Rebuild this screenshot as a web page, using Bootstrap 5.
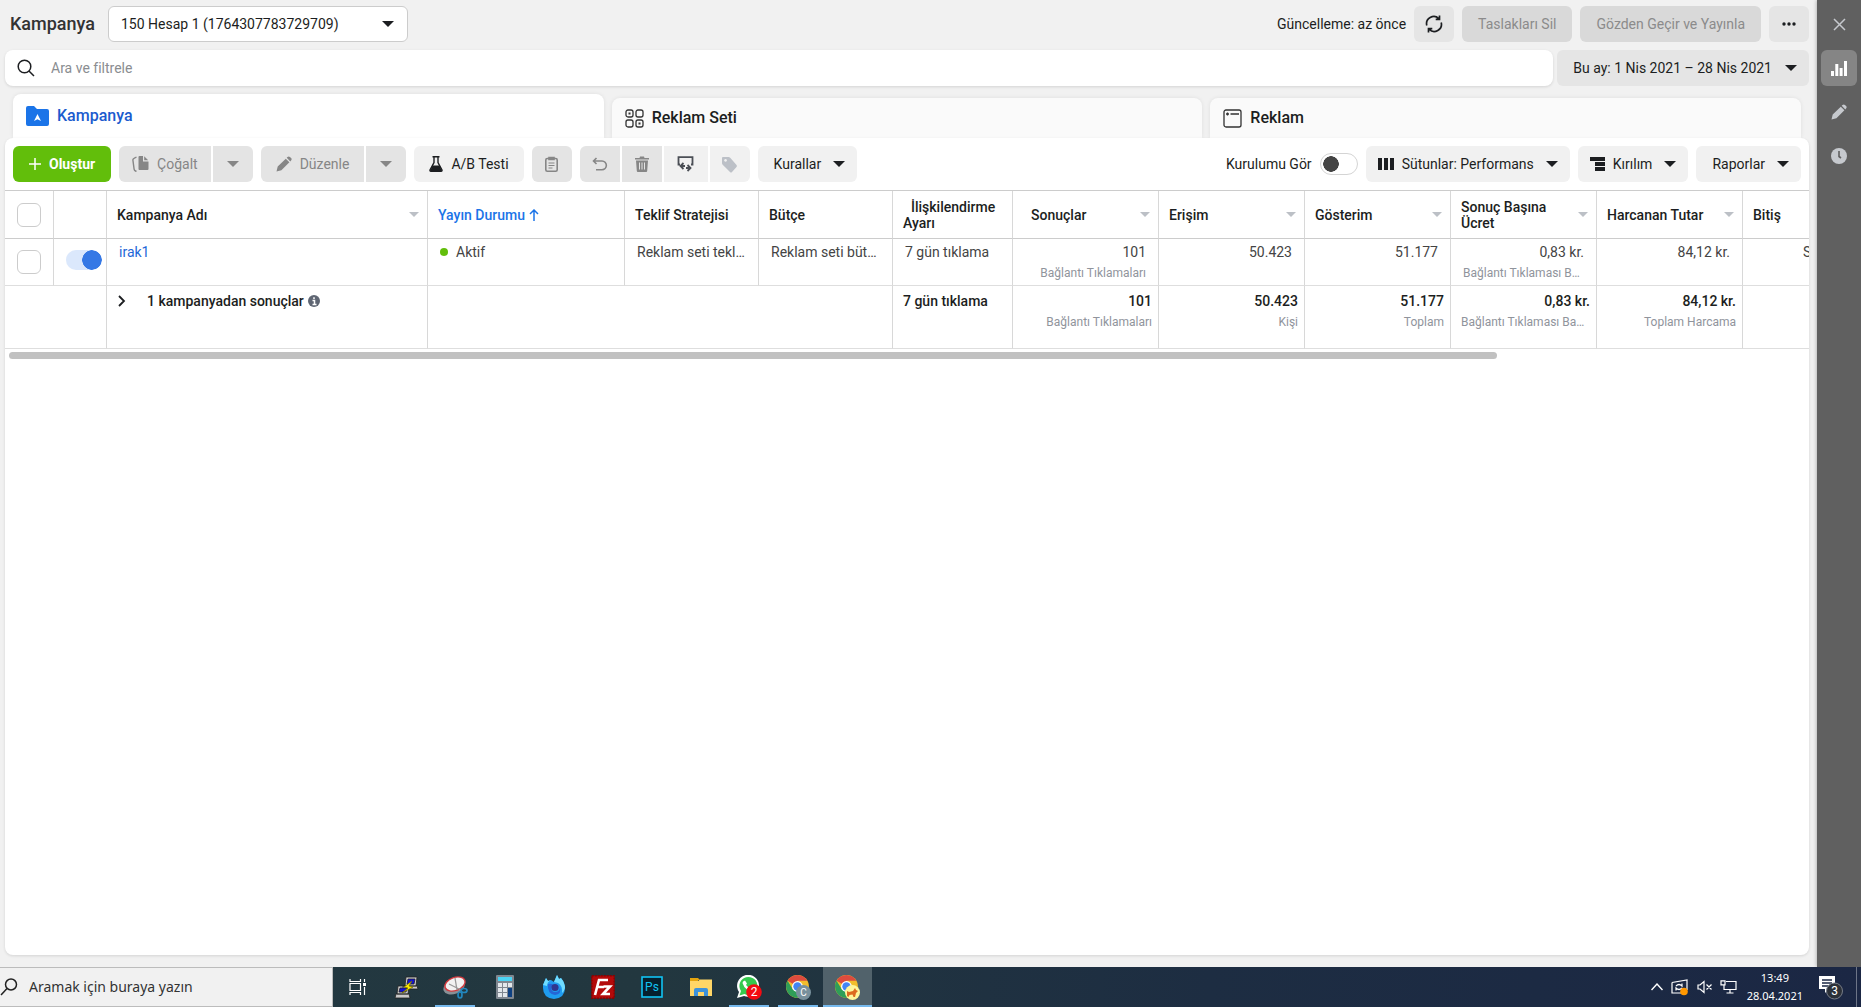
<!DOCTYPE html>
<html lang="tr">
<head>
<meta charset="utf-8">
<meta name="viewport" content="width=device-width, initial-scale=1">
<title>Kampanya</title>
<link href="https://cdn.jsdelivr.net/npm/bootstrap@5.3.0/dist/css/bootstrap.min.css" rel="stylesheet">
<style>
body{font-family:Roboto,"Liberation Sans",sans-serif;font-size:14px;line-height:20px;color:#1c1e21;background:#f1f1f1;height:100vh;overflow:hidden}
.btn{--bs-btn-font-size:14px;--bs-btn-line-height:20px;--bs-btn-border-width:0;--bs-btn-border-radius:6px;--bs-btn-padding-y:0;--bs-btn-padding-x:0;--bs-btn-disabled-opacity:1;height:36px;display:flex;align-items:center;justify-content:center;white-space:nowrap;color:#1c1e21}
svg{display:block;flex:none}
.work-area{min-height:0}
.main-pane{min-width:0;margin-left:5px;padding-right:8px}
.top-bar{height:50px;padding:6px 0 8px}
.heading-text{font-size:18px;font-weight:500;line-height:24px;color:#333;margin:0 5px}
.account-select{width:300px;border:1px solid #ccc;background-color:#fff;padding:0 13px 0 12px}
.caret{width:0;height:0;border:6px solid transparent;border-top-color:currentColor;border-bottom:0;flex:none}
.caret-sm{border-width:5px;border-bottom:0;color:#bcc0c6}
.gray-btn,.gray-btn:disabled{background:#e5e5e5}
.drafts-btn,.drafts-btn:disabled{background:#d9d9d9;color:#8b8b8b}
.off-btn,.off-btn:disabled{background:#e4e4e4;color:#868686}
.soft-btn{background:#f1f1f1}
.sq-btn{width:40px}
.tool-btn{padding:0 15px}
.copy-btn{padding:0 13px}
.date-btn{padding:0 12px 0 16px;gap:13px}
.find-box{height:36px;border-radius:8px;box-shadow:0 1px 3px rgba(0,0,0,.12)}
.find-box input{font-size:14px;outline:0}
.find-box input::placeholder{color:#8a8d91;opacity:1}
.tabs-row{height:52px;padding:0 8px}
.tab-item{height:40px;flex:1 1 0;border-radius:8px 8px 0 0;background:#fafafa;color:#1c1e21;font-size:16px;font-weight:500;text-decoration:none;padding-left:13px;box-shadow:0 0 4px rgba(0,0,0,.08)}
.tab-item.current{height:44px;background:#fff;color:#1b5bce}
.sheet{background:#fff;border-radius:8px;box-shadow:0 1px 3px rgba(0,0,0,.12);margin-bottom:12px;position:relative}
.create-btn,.create-btn:hover{background:#62be0b;color:#fff;font-weight:700}
.btn-pair{gap:2px}
.side-rail{width:44px;padding-top:6px;background:#606060;color:#c6c9ce;box-shadow:0 0 4px rgba(0,0,0,.35)}
.side-rail .btn{width:36px;color:#c6c9ce}
.side-rail .btn.current{background:#858585;color:#fff}
.grid-wrap{border-top:1px solid #ccc;overflow:hidden}
.grid-table{table-layout:fixed;width:2173px;border-collapse:separate;border-spacing:0}
.grid-table th,.grid-table td{border-right:1px solid #d8d8d8;border-bottom:1px solid #dedede;vertical-align:top}
.grid-table th{height:48px;vertical-align:middle;font-weight:500;line-height:16px;border-bottom-color:#ccc;padding:0 8px 0 10px}
.grid-table tbody td{height:47px;padding:3px 12px 0;color:#444}
.grid-table tfoot td{height:63px;padding:5px 6px 0 10px;font-weight:500}
.note{font-size:12px;font-weight:400;color:#90949c;margin-top:1px}
.grid-table input[type=checkbox].form-check-input:not([role]){width:24px;height:24px;border:1px solid #ccc;border-radius:6px;margin:0;display:block}
.grid-table th.pick,.grid-table tbody td.pick{padding:0 0 0 12px;vertical-align:middle}
.form-switch .form-check-input{box-shadow:none;margin:0;float:none}
.live-switch{width:36px!important;height:20px;border:0;background-color:#dbe8fc!important;background-image:radial-gradient(circle 10px at 26px 10px,#3578e5 9.5px,transparent 10px)!important}
.setup-switch{width:38px!important;height:22px;border:1px solid #d4d4d4;background-color:#fff;background-image:radial-gradient(circle 8px at 10px 10px,#444 7.5px,transparent 8px)!important}
.live-dot{width:8px;height:8px;border-radius:50%;background:#62be0b}
.end-cell{padding-left:60px!important}
.scroll-thumb{height:7px;width:82.5%;border-radius:4px;background:#c1c1c1;margin:3px 4px 0}
.taskbar{height:40px;background:linear-gradient(90deg,#233841 0,#22373f 35%,#1d2d42 65%,#1b2744 100%);color:#fff;font-family:"Noto Sans","Open Sans",sans-serif}
.task-find{width:333px;border:1px solid #bcbcbc;border-left:0;background:#f1f1f1;gap:11px}
.task-find input{font-size:14px;outline:0;color:#333}
.task-find input::placeholder{color:#333;opacity:1}
.task-app{width:49px;padding:0;border:0;background:none;display:flex;justify-content:center;align-items:center;position:relative}
.task-app.running::after{content:"";position:absolute;left:4px;right:5px;bottom:0;height:2px;background:#76b9ed}
.task-app.front{background:#51626b}
.task-app.front::after{left:0;right:0}
.app-text{font:12px/1 Roboto,sans-serif;fill:#fff;text-anchor:middle}
.tray{gap:8px}
.tray button{padding:0;border:0;background:none;color:#fff}
.clock-text{font-size:11px;line-height:18px;text-align:center;margin:0 7px 0 2px}
.desk-edge{width:5px;border-left:1px solid #6d7587;align-self:stretch;margin-left:5px}
</style>
</head>
<body class="d-flex flex-column">
<svg width="0" height="0" class="position-absolute" aria-hidden="true">
<symbol id="pencil" viewBox="0 0 16 16"><path fill="currentColor" d="M.5 15.500l1.200-5L9.800 2.700l3.600 3.600-8 8zM10.700 1.800l.8-.9q1.300-1 2.400 0l1.200 1.200q1.100 1.200 0 2.400l-.8.900z"/></symbol>
<symbol id="chrome" viewBox="0 0 24 24"><circle cx="11" cy="11" r="11" fill="#f2bd2c"/><path fill="#dd4b3e" d="M11 11L1.500 5.500A11 11 0 0 1 20.500 5.500H11z"/><path fill="#2f9e58" d="M1.500 5.500A11 11 0 0 0 11 22l4.500-8.500L11 11 6.500 13.600z"/><circle cx="11" cy="11" r="5.200" fill="#fff"/><circle cx="11" cy="11" r="4" fill="#4285f4"/></symbol>
</svg>
<div class="work-area d-flex flex-fill">
<main class="main-pane d-flex flex-column flex-fill">
<header class="top-bar d-flex align-items-center gap-2 flex-shrink-0">
  <h1 class="heading-text">Kampanya</h1>
  <button class="btn account-select justify-content-between"><span>150 Hesap 1 (1764307783729709)</span><i class="caret"></i></button>
  <span class="ms-auto">Güncelleme: az önce</span>
  <button class="btn gray-btn sq-btn" aria-label="Yenile"><svg width="18" height="18" viewBox="0 0 18 18" fill="none" stroke="currentColor" stroke-width="1.700"><path d="M1.800 10.500A7.200 7.200 0 0 1 13.800 3.600M16.200 7.500A7.200 7.200 0 0 1 4.200 14.400M14.500.5V4.300H10.700M3.500 17.500V13.700H7.300"/></svg></button>
  <button class="btn drafts-btn px-3" disabled>Taslakları Sil</button>
  <button class="btn drafts-btn px-3" disabled>Gözden Geçir ve Yayınla</button>
  <button class="btn gray-btn sq-btn" aria-label="Diğer"><svg width="14" height="4"><g fill="currentColor"><circle cx="2" cy="2" r="1.700"/><circle cx="7" cy="2" r="1.700"/><circle cx="12" cy="2" r="1.700"/></g></svg></button>
</header>
<div class="d-flex gap-1 flex-shrink-0">
  <div class="find-box bg-white d-flex align-items-center flex-fill ps-2">
    <svg class="ms-1" width="18" height="18" viewBox="0 0 18 18" fill="none" stroke="#1c1e21" stroke-width="1.500"><circle cx="7.500" cy="7.500" r="6.300"/><path d="M12 12l5 5"/></svg>
    <input class="border-0 bg-transparent flex-fill ms-3 p-0" aria-label="Ara ve filtrele" placeholder="Ara ve filtrele">
  </div>
  <button class="btn gray-btn date-btn"><span>Bu ay: 1 Nis 2021 – 28 Nis 2021</span><i class="caret"></i></button>
</div>
<nav class="tabs-row d-flex align-items-end gap-2 flex-shrink-0">
  <a href="#" class="tab-item current d-flex align-items-center gap-2"><svg width="23" height="20" viewBox="0 0 23 20"><path fill="#1b74e8" d="M2 0h6l3 3h10q2 0 2 2v13q0 2-2 2H2q-2 0-2-2V2q0-2 2-2z"/><path fill="#fff" d="M11.500 8l3.500 7-3.500-1.700L8 15z"/></svg>Kampanya</a>
  <a href="#" class="tab-item d-flex align-items-center gap-2"><svg width="19" height="19" viewBox="0 0 19 19" fill="none" stroke="#333" stroke-width="1.300"><rect x="1" y="1" width="7" height="7" rx="2"/><rect x="11" y="1" width="7" height="7" rx="2"/><rect x="1" y="11" width="7" height="7" rx="2"/><rect x="11" y="11" width="7" height="7" rx="2"/><path d="M3.500 4.500h2M13.500 14.500h2" stroke-width="2"/></svg>Reklam Seti</a>
  <a href="#" class="tab-item d-flex align-items-center gap-2"><svg width="19" height="19" viewBox="0 0 19 19" fill="none" stroke="#333" stroke-width="1.300"><rect x="1" y="1" width="17" height="17" rx="2"/><path d="M3 5h3M4.500 3.500v3M7.500 5H16"/></svg>Reklam</a>
</nav>
<section class="sheet flex-fill overflow-hidden">
  <div class="d-flex p-2 gap-2">
    <button class="btn create-btn px-3 gap-2"><svg width="12" height="12" stroke="#fff" stroke-width="1.500"><path d="M6 0v12M0 6h12"/></svg>Oluştur</button>
    <div class="btn-pair d-flex">
      <button class="btn off-btn copy-btn rounded-end-0 gap-2" disabled><svg width="17" height="16" viewBox="0 0 17 16"><path fill="currentColor" d="M7.500 0H11v5.500h5.500V13q0 1-1 1h-8q-1 0-1-1V1q0-1 1-1zM12.200.3l4 4h-4z"/><path fill="none" stroke="currentColor" stroke-width="1.400" d="M4.500 1L2 2.300q-1.300.6-1.100 1.900l1.200 9q.2 1.300 1.400 1.800l1 .5"/></svg>Çoğalt</button>
      <button class="btn off-btn rounded-start-0 sq-btn" disabled aria-label="Çoğalt seçenekleri"><i class="caret"></i></button>
    </div>
    <div class="btn-pair d-flex">
      <button class="btn off-btn tool-btn rounded-end-0 gap-2" disabled><svg width="16" height="16"><use href="#pencil"/></svg>Düzenle</button>
      <button class="btn off-btn rounded-start-0 sq-btn" disabled aria-label="Düzenle seçenekleri"><i class="caret"></i></button>
    </div>
    <button class="btn soft-btn tool-btn gap-2"><svg width="14" height="16" viewBox="0 0 14 16"><path d="M3.500.8h7M5 1v5.500L1 14q-.3 1.200.8 1.200h10.400q1.100 0 .8-1.200L9 6.500V1" fill="none" stroke="currentColor" stroke-width="1.400"/><path d="M3.500 9.500h7L13 15H1z" fill="currentColor"/></svg>A/B Testi</button>
    <button class="btn off-btn sq-btn" disabled aria-label="Pano"><svg width="13" height="16" viewBox="0 0 13 16" fill="none" stroke="currentColor" stroke-width="1.600"><rect x=".8" y="2.500" width="11.400" height="12.700" rx="1.500"/><path d="M4 3.500V1.500h5v2z" fill="currentColor"/><path d="M3.500 7h6M3.500 9.500h6M3.500 12h4" stroke-width="1.200"/></svg></button>
    <div class="btn-pair d-flex">
      <button class="btn off-btn rounded-end-0 sq-btn" disabled aria-label="Geri al"><svg width="16" height="14" viewBox="0 0 16 14" fill="none" stroke="currentColor" stroke-width="1.600"><path d="M4.500 1L1.500 4l3 3M1.500 4H10a4.300 4.300 0 0 1 0 8.700H4"/></svg></button>
      <button class="btn off-btn rounded-0 sq-btn" disabled aria-label="Sil"><svg width="14" height="16" viewBox="0 0 14 16"><path fill="currentColor" d="M0 2h4.500L5 .5h4L9.500 2H14v1.600H0zM1 4.500h12L12.200 15q-.1 1-1 1H2.800q-.9 0-1-1z"/><path stroke="#e4e4e4" d="M4.500 6.500v7M7 6.500v7M9.500 6.500v7"/></svg></button>
      <button class="btn soft-btn rounded-0" style="width:44px" aria-label="İçe ve dışa aktar"><svg width="17" height="16" viewBox="0 0 17 16" fill="none" stroke="#4b4f56" stroke-width="1.800"><path d="M3 8.500H1.500V1.200h14v7.300H14M6.500 7L3.500 10l3 3M3.500 10H8M10.500 9l3 3-3 3M13.500 12H9"/></svg></button>
      <button class="btn soft-btn rounded-start-0 sq-btn" aria-label="Etiket"><svg width="17" height="17" viewBox="0 0 17 17"><path fill="#bcc0c7" fill-rule="evenodd" d="M2 1h5.500q1 0 1.700.7L15.500 9q1 1 0 2L11 16q-1 1-2 0L1.700 8.700Q1 8 1 7V2q0-1 1-1zm2.500 2a1.400 1.400 0 1 0 .1 0z"/></svg></button>
    </div>
    <button class="btn soft-btn px-3 pe-2 gap-2"><span>Kurallar</span><i class="caret mx-1"></i></button>
    <div class="form-switch ms-auto d-flex align-items-center gap-2 p-0 m-0"><label for="setup">Kurulumu Gör</label><input class="form-check-input setup-switch" type="checkbox" role="switch" id="setup"></div>
    <button class="btn soft-btn px-2 gap-2"><svg class="ms-1" width="16" height="12"><path fill="currentColor" d="M0 0h4v12H0zM6 0h4v12H6zM12 0h4v12h-4z"/></svg><span>Sütunlar: Performans</span><i class="caret mx-1"></i></button>
    <button class="btn soft-btn px-2 gap-2"><svg class="ms-1" width="15" height="14"><path fill="currentColor" d="M0 0h15v4H0zM5 5h10v4H5zM5 10h10v4H5z"/></svg><span>Kırılım</span><i class="caret mx-1"></i></button>
    <button class="btn soft-btn px-3 pe-2 gap-2"><span>Raporlar</span><i class="caret mx-1"></i></button>
  </div>
  <div class="grid-wrap">
  <table class="grid-table">
    <colgroup><col style="width:49px"><col style="width:53px"><col style="width:321px"><col style="width:197px"><col style="width:134px"><col style="width:134px"><col style="width:120px"><col span="5" style="width:146px"><col></colgroup>
    <thead><tr>
      <th class="pick"><input type="checkbox" class="form-check-input" aria-label="Tümünü seç"></th><th></th>
      <th><div class="d-flex align-items-center justify-content-between">Kampanya Adı<i class="caret caret-sm"></i></div></th>
      <th style="color:#1b74e8"><div class="d-flex align-items-center gap-1">Yayın Durumu<svg width="10" height="12" fill="none" stroke="currentColor" stroke-width="1.500"><path d="M5 12V1M1 5l4-4 4 4"/></svg></div></th>
      <th>Teklif Stratejisi</th><th>Bütçe</th><th><span class="ps-2">İlişkilendirme</span> Ayarı</th>
      <th><div class="d-flex align-items-center justify-content-between ps-2">Sonuçlar<i class="caret caret-sm"></i></div></th>
      <th><div class="d-flex align-items-center justify-content-between">Erişim<i class="caret caret-sm"></i></div></th>
      <th><div class="d-flex align-items-center justify-content-between">Gösterim<i class="caret caret-sm"></i></div></th>
      <th><div class="d-flex align-items-center justify-content-between">Sonuç Başına Ücret<i class="caret caret-sm"></i></div></th>
      <th><div class="d-flex align-items-center justify-content-between">Harcanan Tutar<i class="caret caret-sm"></i></div></th>
      <th>Bitiş</th>
    </tr></thead>
    <tbody><tr>
      <td class="pick"><input type="checkbox" class="form-check-input" aria-label="irak1 seç"></td>
      <td class="pick"><div class="form-switch p-0 m-0 d-flex mb-1"><input class="form-check-input live-switch" type="checkbox" role="switch" checked aria-label="irak1 aç/kapat"></div></td>
      <td><a href="#" class="text-decoration-none" style="color:#1f68d8">irak1</a></td>
      <td><div class="d-flex align-items-center gap-2"><i class="live-dot"></i>Aktif</div></td>
      <td><div class="text-truncate">Reklam seti teklifi</div></td>
      <td><div class="text-truncate">Reklam seti bütçesi</div></td>
      <td>7 gün tıklama</td>
      <td class="text-end">101<div class="note">Bağlantı Tıklamaları</div></td>
      <td class="text-end">50.423</td><td class="text-end">51.177</td>
      <td class="text-end">0,83 kr.<div class="note text-truncate">Bağlantı Tıklaması Başına</div></td>
      <td class="text-end">84,12 kr.</td><td class="end-cell">Sürekli</td>
    </tr></tbody>
    <tfoot><tr>
      <td colspan="2"></td>
      <td><div class="d-flex align-items-center"><svg width="10" height="12" viewBox="-1 0 10 12" fill="none" stroke="currentColor" stroke-width="1.800"><path d="M1 1l5 5-5 5"/></svg><span class="ms-3 ps-1">1 kampanyadan sonuçlar</span><svg class="ms-1" width="12" height="12"><circle cx="6" cy="6" r="6" fill="#5f6673"/><path d="M4.500 5.500h2V9.500M4.500 9.500h4M6 2.200v1.800" stroke="#fff" stroke-width="1.500" fill="none"/></svg></div></td>
      <td colspan="3"></td><td>7 gün tıklama</td>
      <td class="text-end">101<div class="note">Bağlantı Tıklamaları</div></td>
      <td class="text-end">50.423<div class="note">Kişi</div></td>
      <td class="text-end">51.177<div class="note">Toplam</div></td>
      <td class="text-end">0,83 kr.<div class="note text-truncate">Bağlantı Tıklaması Başına</div></td>
      <td class="text-end">84,12 kr.<div class="note">Toplam Harcama</div></td><td></td>
    </tr></tfoot>
  </table>
  </div>
  <div class="scroll-thumb"></div>
</section>
</main>
<aside class="side-rail d-flex flex-column align-items-center gap-2 flex-shrink-0">
  <button class="btn" aria-label="Kapat"><svg width="13" height="13" stroke="currentColor" stroke-width="1.500"><path d="M1 1l11 11M12 1L1 12"/></svg></button>
  <button class="btn current" aria-label="Grafikler"><svg width="16" height="15"><path fill="currentColor" d="M0 10h3v5H0zM4.300 3h3v12h-3zM8.600 7h3v8h-3zM13 0h3v15h-3z"/></svg></button>
  <button class="btn" aria-label="Düzenle"><svg width="16" height="16"><use href="#pencil"/></svg></button>
  <button class="btn" aria-label="Geçmiş"><svg width="16" height="16"><circle cx="8" cy="8" r="8" fill="currentColor"/><path d="M8 3v5.500l2 1.500" stroke="#606060" stroke-width="1.600" fill="none"/></svg></button>
</aside>
</div>
<footer class="taskbar d-flex flex-shrink-0">
  <div class="task-find d-flex align-items-center">
    <svg width="18" height="18" viewBox="0 0 18 18" fill="none" stroke="#222" stroke-width="1.500"><circle cx="11" cy="6.500" r="5.500"/><path d="M7 10.500L1 17"/></svg>
    <input class="border-0 bg-transparent p-0 flex-fill" aria-label="Arama" placeholder="Aramak için buraya yazın">
  </div>
  <button class="task-app" aria-label="Görev görünümü"><svg width="17" height="16" fill="none" stroke="#fff" stroke-width="1.200"><path d="M1 0v2.500h10.500V0M1 16v-2.500h10.500V16M1 4.500h10.500v7H1zM15.500 0v3M15.500 8v8"/><path fill="#fff" stroke="none" d="M14 4h3v3h-3z"/></svg></button>
  <button class="task-app" aria-label="PuTTY"><svg width="24" height="24" stroke="#222" stroke-width=".8"><path fill="#c9c9c9" d="M11 2h11l-1 9H10zM8 11h14l1 3H8zM3 11h11l-1 8H2zM1 19h13l1 4H0z"/><path fill="#1010d8" d="M13 4h7l-1 5h-7zM5 13h7l-1 4H4z"/><path fill="#ffea00" stroke="#776d00" d="M17 6l-8 6 4 1-6 5 11-6-4-1z"/></svg></button>
  <button class="task-app running" aria-label="Ekran Alıntısı"><svg width="25" height="24"><ellipse cx="11" cy="12" rx="11" ry="7" fill="#8a9096" transform="rotate(-20 11 12)"/><ellipse cx="12" cy="9" rx="10.500" ry="6.500" fill="#f2f2f2" stroke="#d43a3f" stroke-width="1.400" transform="rotate(-20 12 9)"/><path d="M12 3l2 12M6 9l12 6" stroke="#999" stroke-width="1.300"/><g fill="none" stroke="#2286bd" stroke-width="1.700"><ellipse cx="21" cy="15.500" rx="3" ry="2"/><ellipse cx="17" cy="20" rx="2" ry="3"/></g></svg></button>
  <button class="task-app" aria-label="Hesap Makinesi"><svg width="18" height="24"><rect width="18" height="24" rx="1" fill="#7f8790"/><path fill="#4bd3f4" d="M2 2h14v4H2z"/><path fill="#e3e7eb" d="M2 8h4v4H2zM7 8h4v4H7zM12 8h4v4h-4zM2 13h4v4H2zM7 13h4v4H7zM2 18h4v4H2zM7 18h4v4H7z"/><path fill="#0e4182" d="M12 13h4v9h-4z"/></svg></button>
  <button class="task-app" aria-label="Firefox"><svg width="24" height="24"><path fill="#1f9cf0" d="M1 10L4 3l2 3 3-1 3 2 3-7 2 4 2-1q4 5 4 10 0 10-11 11Q1 23 1 13z"/><path fill="#6fdcff" d="M15 0l2 4 2-1q4 5 4 10-1 4-3 5 1-7-4-10l-4-1zM4 3l2 3 3-1q-4 2-4 6L1 10z"/><path fill="#2565d6" d="M6 9q3-1 6 1l-3 2q0 5 4 5 5 0 5-5 2 7-5 8-8-1-7-11z"/><circle cx="13" cy="12.500" r="3.600" fill="#30368f"/></svg></button>
  <button class="task-app" aria-label="FileZilla"><svg width="24" height="24"><rect x=".8" y=".8" width="22.400" height="22.400" fill="#b30a0a" stroke="#8b0000" stroke-width="1.500" stroke-dasharray="2 1"/><path fill="none" stroke="#fff" stroke-width="2.600" d="M4 20L8 5h9M6 12h7M12.500 11.500H19L12 19h7"/></svg></button>
  <button class="task-app" aria-label="Photoshop"><svg width="22" height="22"><rect x="1" y="1" width="20" height="20" fill="#06202d" stroke="#11c3f3" stroke-width="1.600"/><text class="app-text" x="11" y="15" style="fill:#11c3f3">Ps</text></svg></button>
  <button class="task-app" aria-label="Dosya Gezgini"><svg width="22" height="19"><path fill="#e5a50f" d="M0 0h8l2 2h-2v4H0z"/><path fill="#ffd667" d="M0 3h8l2-1.500h12V18H0z"/><path fill="#3d92da" d="M4 18v-6q0-2 2-2h10q2 0 2 2v6h-4v-4H8v4z"/></svg></button>
  <button class="task-app running" aria-label="WhatsApp"><svg width="25" height="25"><path fill="#fff" d="M0 23l2-6A11 11 0 1 1 7 21z"/><path fill="#35c94e" d="M2.500 20.500l1.500-4.500A9 9 0 1 1 7.500 19z"/><path fill="#fff" d="M8 5.500l2 3-1 1.500 3 3 1.500-1 3 2q-2 3-6 1-4-3-5-7 0-2 2.500-2.500z"/><circle cx="17" cy="17" r="7.800" fill="#f40b12"/><text class="app-text" x="17" y="21">2</text></svg></button>
  <button class="task-app running" aria-label="Chrome"><svg width="25" height="25"><use href="#chrome" width="25" height="25"/><circle cx="17.500" cy="17.500" r="7.500" fill="#78909c"/><text class="app-text" x="17.500" y="21" style="font-size:10px">C</text></svg></button>
  <button class="task-app running front" aria-label="Chrome, etkin"><svg width="25" height="25"><use href="#chrome" width="25" height="25"/><circle cx="17.500" cy="17.500" r="7.500" fill="#fff59b"/><path fill="#dd6a1f" d="M12 16l2 1 4-1 2-3 1 2 2 1-2 2-1 4h-1.500l-1-2.500-3 .5-1 2-1.500-1z"/></svg></button>
  <div class="tray ms-auto d-flex align-items-center">
    <button aria-label="Gizli simgeler"><svg width="12" height="8" fill="none" stroke="#fff" stroke-width="1.400"><path d="M.5 7L6 1l5.500 6"/></svg></button>
    <button aria-label="Eşitleme"><svg width="18" height="18" fill="none" stroke="#fff" stroke-width="1.200"><path d="M1 4.500L16 2v10M1 4.500v10.500h9M5 8q3-3 6 0V5.500M11 10q-3 3-6 0v2.500"/><circle cx="13" cy="13.500" r="3.800" fill="#ff9800" stroke="none"/></svg></button>
    <button aria-label="Ses kapalı"><svg width="15" height="14" fill="none" stroke="#fff" stroke-width="1.200"><path d="M1 5h2l4-3.500v11L3 9H1zM9.500 4.500l5 5M14.500 4.500l-5 5"/></svg></button>
    <button aria-label="Ağ"><svg width="17" height="14" fill="none" stroke="#fff" stroke-width="1.200"><path d="M6 1.500h10v8H4V5M1 .8h4v4H1zM10 9.500V13M6.500 13h7"/></svg></button>
    <div class="clock-text">13:49<br>28.04.2021</div>
    <button aria-label="Bildirimler"><svg width="25" height="26"><path fill="#fff" d="M1 2h16v13h-6l-4 4v-4H1z"/><path stroke="#1b2744" stroke-width="1.300" d="M4 6h10M4 9h10M4 12h6"/><circle cx="16.500" cy="17" r="8" fill="#2b3038" stroke="#777d88"/><text class="app-text" x="16.500" y="21">3</text></svg></button>
    <div class="desk-edge"></div>
  </div>
</footer>
<script src="https://cdn.jsdelivr.net/npm/bootstrap@5.3.0/dist/js/bootstrap.bundle.min.js"></script>
</body>
</html>
